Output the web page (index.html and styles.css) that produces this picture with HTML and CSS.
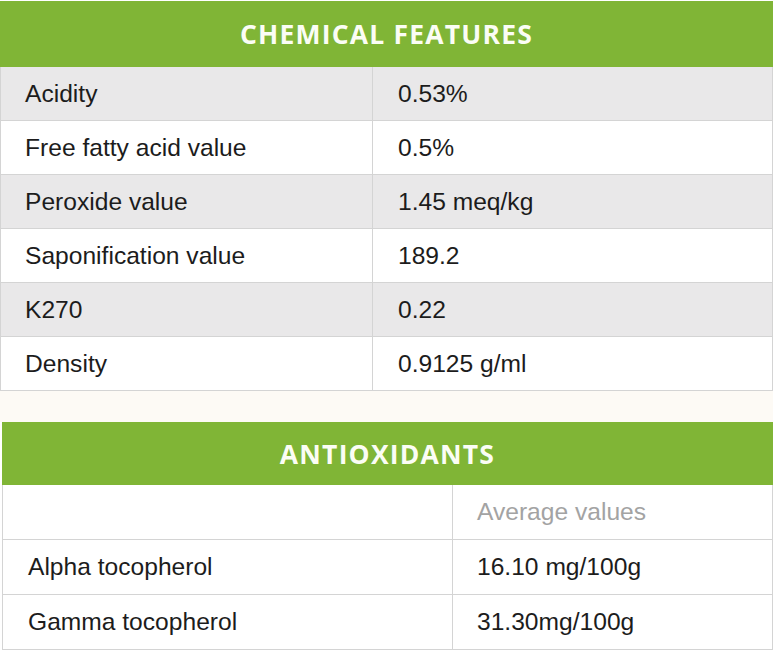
FILE: index.html
```html
<!DOCTYPE html>
<html>
<head>
<meta charset="utf-8">
<link rel="stylesheet" href="styles.css">
</head>
<body>
<section class="table chem">
  <div class="head">CHEMICAL FEATURES</div>
  <div class="row alt"><div class="c1">Acidity</div><div class="c2">0.53%</div></div>
  <div class="row"><div class="c1">Free fatty acid value</div><div class="c2">0.5%</div></div>
  <div class="row alt"><div class="c1">Peroxide value</div><div class="c2">1.45 meq/kg</div></div>
  <div class="row"><div class="c1">Saponification value</div><div class="c2">189.2</div></div>
  <div class="row alt"><div class="c1">K270</div><div class="c2">0.22</div></div>
  <div class="row"><div class="c1">Density</div><div class="c2">0.9125 g/ml</div></div>
</section>
<div class="gap"></div>
<section class="table anti">
  <div class="head">ANTIOXIDANTS</div>
  <div class="row"><div class="c1"></div><div class="c2 muted">Average values</div></div>
  <div class="row"><div class="c1">Alpha tocopherol</div><div class="c2">16.10 mg/100g</div></div>
  <div class="row"><div class="c1">Gamma tocopherol</div><div class="c2">31.30mg/100g</div></div>
</section>
</body>
</html>
```
FILE: styles.css
```css
html, body {
  margin: 0;
  padding: 0;
  background: #ffffff;
}
body {
  padding-top: 1px;
  font-family: "Liberation Sans", Arial, sans-serif;
  color: #1c1c1c;
}
.table {
  display: flex;
  flex-direction: column;
}
.chem {
  width: 773px;
}
.anti {
  margin-left: 2px;
  width: 771px;
}
.head {
  background: #80b536;
  color: #fbfdf5;
  font-family: "Open Sans", sans-serif;
  font-weight: 700;
  font-size: 26.5px;
  letter-spacing: 1.2px;
  text-align: center;
  display: flex;
  align-items: center;
  justify-content: center;
}
.chem .head { height: 66px; }
.anti .head { height: 63px; }
.row {
  display: grid;
  border-bottom: 1px solid #d4d4d4;
  border-left: 1px solid #d4d4d4;
  border-right: 1px solid #d4d4d4;
  font-size: 24.6px;
  background: #ffffff;
}
.chem .row {
  grid-template-columns: 372px 1fr;
  height: 53px;
}
.anti .row {
  grid-template-columns: 450px 1fr;
  height: 54px;
}
.row.alt {
  background: #e9e8e9;
}
.c1, .c2 {
  display: flex;
  align-items: center;
}
.c1 {
  padding-left: 24px;
  border-right: 1px solid #d4d4d4;
}
.c2 {
  padding-left: 25px;
}
.anti .c1 { padding-left: 25px; }
.anti .c2 { padding-left: 24px; }
.muted {
  color: #a3a3a3;
}
.gap {
  height: 31px;
  background: #fdfaf5;
}
```
